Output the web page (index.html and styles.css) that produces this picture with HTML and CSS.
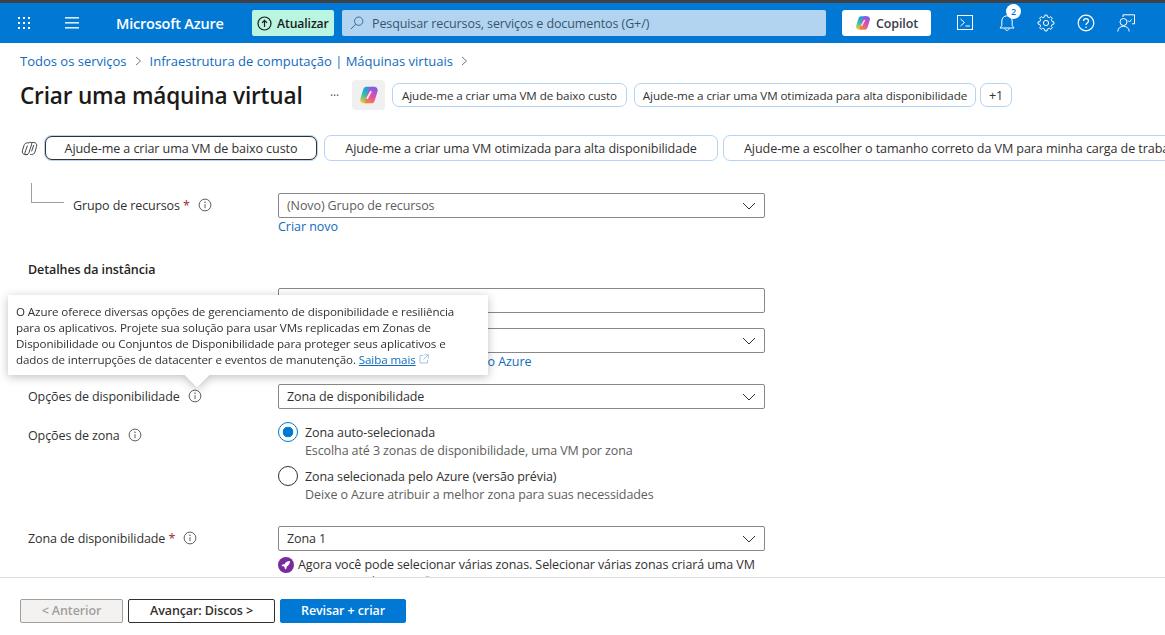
FILE: index.html
```html
<!DOCTYPE html>
<html lang="pt-BR">
<head>
    <meta charset="utf-8">
    <title>Criar uma máquina virtual - Microsoft Azure</title>
    <link rel="stylesheet" href="styles.css">
</head>
<body>
    <svg class="defs" width="0" height="0">
        <defs>
            <linearGradient id="cpA" x1="0.6" y1="0" x2="0.3" y2="1">
                <stop offset="0" stop-color="#2a8fe8"/>
                <stop offset="0.5" stop-color="#27c0a8"/>
                <stop offset="1" stop-color="#f2c93a"/>
            </linearGradient>
            <linearGradient id="cpB" x1="0.7" y1="0" x2="0.3" y2="1">
                <stop offset="0" stop-color="#7c5ce8"/>
                <stop offset="0.55" stop-color="#e04fa8"/>
                <stop offset="1" stop-color="#f6843c"/>
            </linearGradient>
            <symbol id="copilot" viewBox="0 0 24 24">
                <path fill="url(#cpA)" d="M9 2h6.500c1.300 0 1.900 1 1.500 2.200L12 19.500c-.5 1.500-1.600 2.500-3 2.500H6C2.800 22 .9 19.400 1.800 16.300L5.200 5.200C5.800 3.200 7 2 9 2z"/>
                <path fill="url(#cpB)" d="M15 22H8.500c-1.300 0-1.900-1-1.500-2.200L12 4.500C12.500 3 13.600 2 15 2h3c3.200 0 5.100 2.600 4.200 5.700l-3.400 11.100C18.200 20.800 17 22 15 22z"/>
                <path d="M14.500 7.500L9.500 16.500" stroke="#fff" stroke-width="2.200" fill="none" opacity=".85"/>
            </symbol>
            <symbol id="info" viewBox="0 0 14 14">
                <circle cx="7" cy="7" r="5.900" fill="none" stroke="currentColor"/>
                <path d="M7 6.200v4" stroke="currentColor" fill="none"/>
                <circle cx="7" cy="4.200" r=".8" fill="currentColor"/>
            </symbol>
            <symbol id="chevron" viewBox="0 0 14 8">
                <path d="M1 1l6 6 6-6" fill="none" stroke="currentColor" stroke-width="1"/>
            </symbol>
            <symbol id="external" viewBox="0 0 10 10">
                <path d="M4 1.500H1v7.500h7.500V6M5.500.7h3.800v3.800M9 1L4.500 5.500" fill="none" stroke="currentColor" stroke-width=".8"/>
            </symbol>
        </defs>
    </svg>

    <header class="topbar">
        <svg class="bar-icon waffle" width="14" height="14" viewBox="0 0 14 14" fill="#fff">
            <rect x="1" y="1" width="2" height="2"/><rect x="6" y="1" width="2" height="2"/><rect x="11" y="1" width="2" height="2"/>
            <rect x="1" y="6" width="2" height="2"/><rect x="6" y="6" width="2" height="2"/><rect x="11" y="6" width="2" height="2"/>
            <rect x="1" y="11" width="2" height="2"/><rect x="6" y="11" width="2" height="2"/><rect x="11" y="11" width="2" height="2"/>
        </svg>
        <svg class="bar-icon burger" width="14" height="12" viewBox="0 0 14 12" fill="#dcebf8">
            <rect y="0" width="14" height="1.600"/><rect y="5" width="14" height="1.600"/><rect y="10" width="14" height="1.600"/>
        </svg>
        <span class="brand">Microsoft Azure</span>
        <button class="update-btn">
            <svg width="15" height="15" viewBox="0 0 15 15" fill="none" stroke="#1b1b1b" stroke-width="1.200">
                <circle cx="7.500" cy="7.500" r="6.500"/>
                <path d="M7.500 11V4.500M5 6.800l2.500-2.500L10 6.800"/>
            </svg>
            Atualizar
        </button>
        <div class="search">
            <svg width="14" height="14" viewBox="0 0 14 14" fill="none" stroke="#3c6e9c" stroke-width="1">
                <circle cx="8.700" cy="5.200" r="4.200"/>
                <path d="M5.700 8.200L1 13"/>
            </svg>
            Pesquisar recursos, serviços e documentos (G+/)
        </div>
        <button class="copilot-btn">
            <svg width="16" height="16"><use href="#copilot"/></svg>
            Copilot
        </button>
        <div class="bar-tools">
            <svg width="18" height="16" viewBox="0 0 18 16" fill="none" stroke="#fff">
                <rect x=".5" y=".5" width="15" height="14"/>
                <path d="M3.500 4l4 3.500-4 3.500M8.500 11h4.500"/>
            </svg>
            <div class="bell">
                <svg width="16" height="18" viewBox="0 0 16 18" fill="none" stroke="#fff">
                    <path d="M1 14h14l-1.800-2.500V7A5.200 5.200 0 0 0 2.800 7v4.500zM6 14.500c0 2.500 4 2.500 4 0"/>
                </svg>
                <span class="badge">2</span>
            </div>
            <svg width="18" height="18" viewBox="0 0 18 18" fill="none" stroke="#fff" stroke-linejoin="round">
                <polygon points="7.58,2.86 7.89,1.08 10.11,1.08 10.42,2.86 12.34,3.66 13.81,2.61 15.39,4.19 14.34,5.66 15.14,7.58 16.92,7.89 16.92,10.11 15.14,10.42 14.34,12.34 15.39,13.81 13.81,15.39 12.34,14.34 10.42,15.14 10.11,16.92 7.89,16.92 7.58,15.14 5.66,14.34 4.19,15.39 2.61,13.81 3.66,12.34 2.86,10.42 1.08,10.11 1.08,7.89 2.86,7.58 3.66,5.66 2.61,4.19 4.19,2.61 5.66,3.66"/>
                <circle cx="9" cy="9" r="2.600"/>
            </svg>
            <svg width="18" height="18" viewBox="0 0 18 18" fill="none" stroke="#fff" stroke-width="1.200">
                <circle cx="9" cy="9" r="7.800"/>
                <path d="M6.500 7c0-3.200 5-3.200 5 0 0 2-2.500 2-2.500 4"/>
                <circle cx="9" cy="13.300" r=".8" fill="#fff" stroke="none"/>
            </svg>
            <svg width="18" height="18" viewBox="0 0 18 18" fill="none" stroke="#fff">
                <path d="M6 3V.8h11.500v9H15"/>
                <circle cx="6.500" cy="8" r="3.500"/>
                <path d="M.8 17.500c0-7 11.400-7 11.400 0M11 6.500l1.500 1.500 2-2.500"/>
            </svg>
        </div>
    </header>

    <nav class="breadcrumb">
        <a>Todos os serviços</a>
        <svg width="7" height="10" viewBox="0 0 7 10"><path d="M1 1l4.500 4L1 9" fill="none" stroke="#777"/></svg>
        <a>Infraestrutura de computação | Máquinas virtuais</a>
        <svg width="7" height="10" viewBox="0 0 7 10"><path d="M1 1l4.500 4L1 9" fill="none" stroke="#777"/></svg>
    </nav>

    <div class="title-row">
        <h1>Criar uma máquina virtual</h1>
        <span class="more">···</span>
        <span class="copilot-tile"><svg width="20" height="20"><use href="#copilot"/></svg></span>
        <button class="chip chip-a">Ajude-me a criar uma VM de baixo custo</button>
        <button class="chip chip-b">Ajude-me a criar uma VM otimizada para alta disponibilidade</button>
        <button class="chip chip-c">+1</button>
    </div>

    <div class="prompts">
        <svg class="prompt-icon" width="17" height="17" viewBox="0 0 24 24" fill="none" stroke="#444" stroke-width="1.400">
            <path d="M11 4H9C6.500 4 5 5.500 4.300 7.500L2 15c-1 3 1 5.500 4 5.500h3.500"/>
            <path d="M13 20.500h2c2.500 0 4-1.500 4.700-3.500L22 9c1-3-1-5.500-4-5.500h-3.500"/>
            <path d="M10.500 4c1.500-1 4-1 4.500.5.300.8.100 1.500-.2 2.500l-3.600 11c-.6 2-2 2.700-3.700 2.700-1.500 0-2.500-1.200-2-2.700L9 8"/>
            <path d="M15 16l3-9"/>
        </svg>
        <button class="prompt prompt-active">Ajude-me a criar uma VM de baixo custo</button>
        <button class="prompt prompt-b">Ajude-me a criar uma VM otimizada para alta disponibilidade</button>
        <button class="prompt prompt-c">Ajude-me a escolher o tamanho correto da VM para minha carga de trabalho</button>
    </div>

    <main class="form">
        <div class="row row-group">
            <span class="tree-line"></span>
            <label class="label label-group">Grupo de recursos <em>*</em><svg class="info" width="14" height="14"><use href="#info"/></svg></label>
            <div class="field">
                <div class="select placeholder">(Novo) Grupo de recursos<svg width="14" height="8"><use href="#chevron"/></svg></div>
                <a class="link">Criar novo</a>
            </div>
        </div>

        <h2>Detalhes da instância</h2>

        <div class="row row-name">
            <span class="label"></span>
            <div class="field"><div class="select"></div></div>
        </div>

        <div class="row row-region">
            <span class="label"></span>
            <div class="field">
                <div class="select"><svg width="14" height="8"><use href="#chevron"/></svg></div>
                <a class="link">Implantar em uma zona estendida do Azure</a>
            </div>
        </div>

        <div class="row row-avail">
            <label class="label">Opções de disponibilidade<svg class="info" width="14" height="14"><use href="#info"/></svg></label>
            <div class="field">
                <div class="select">Zona de disponibilidade<svg width="14" height="8"><use href="#chevron"/></svg></div>
            </div>
        </div>

        <div class="row row-zone-options">
            <label class="label label-zone">Opções de zona<svg class="info" width="14" height="14"><use href="#info"/></svg></label>
            <div class="field">
                <div class="radio-opt">
                    <span class="radio radio-on"></span>
                    <div class="radio-text">
                        <div class="radio-title">Zona auto-selecionada</div>
                        <div class="radio-desc">Escolha até 3 zonas de disponibilidade, uma VM por zona</div>
                    </div>
                </div>
                <div class="radio-opt">
                    <span class="radio"></span>
                    <div class="radio-text">
                        <div class="radio-title">Zona selecionada pelo Azure (versão prévia)</div>
                        <div class="radio-desc">Deixe o Azure atribuir a melhor zona para suas necessidades</div>
                    </div>
                </div>
            </div>
        </div>

        <div class="row row-zone">
            <label class="label">Zona de disponibilidade <em>*</em><svg class="info" width="14" height="14"><use href="#info"/></svg></label>
            <div class="field">
                <div class="select">Zona 1<svg width="14" height="8"><use href="#chevron"/></svg></div>
                <div class="notice">
                    <svg width="16" height="16" viewBox="0 0 16 16">
                        <circle cx="8" cy="8" r="8" fill="#7a2a9c"/>
                        <path d="M12 4c-2.500 0-4.500 1.200-5.500 3.200L4.500 7.500 3.500 9l2 .3 1.200 1.200.3 2 1.500-1 .3-2C10.800 8.500 12 6.500 12 4z" fill="#fff"/>
                    </svg>
                    <p>Agora você pode selecionar várias zonas. Selecionar várias zonas criará uma VM por zona. <a class="link-inline">Saiba mais</a> <svg class="ext" width="10" height="10"><use href="#external"/></svg></p>
                </div>
            </div>
        </div>

        <div class="tooltip">
            O Azure oferece diversas opções de gerenciamento de disponibilidade e resiliência para os aplicativos. Projete sua solução para usar VMs replicadas em Zonas de Disponibilidade ou Conjuntos de Disponibilidade para proteger seus aplicativos e dados de interrupções de datacenter e eventos de manutenção. <a class="link-inline">Saiba mais</a> <svg class="ext" width="10" height="10"><use href="#external"/></svg>
        </div>
    </main>

    <footer class="footer">
        <button class="btn btn-disabled">&lt; Anterior</button>
        <button class="btn btn-next">Avançar: Discos &gt;</button>
        <button class="btn btn-primary">Revisar + criar</button>
    </footer>
</body>
</html>
```

FILE: styles.css
```css
* {
    box-sizing: border-box;
}
html, body {
    height: 100%;
}
body {
    margin: 0;
    display: flex;
    flex-direction: column;
    overflow: hidden;
    font-family: "Open Sans", "Noto Sans", Arial, sans-serif;
    font-size: 12.5px;
    letter-spacing: -0.1px;
    color: #323130;
    background-color: #fff;
}
button {
    font-family: inherit;
    letter-spacing: inherit;
    cursor: pointer;
}
.defs {
    position: absolute;
}

/* barra superior */
.topbar {
    flex: none;
    height: 43px;
    display: flex;
    align-items: center;
    background-color: #0078d4;
    border-top: 3px solid #3f4144;
    color: #fff;
}
.waffle {
    margin-left: 17px;
}
.burger {
    margin-left: 34px;
}
.brand {
    margin-left: 37px;
    width: 136px;
    font-size: 14.5px;
    font-weight: 600;
    letter-spacing: -0.2px;
}
.update-btn {
    width: 82px;
    height: 26px;
    display: flex;
    align-items: center;
    gap: 5px;
    padding: 0 0 0 5px;
    border: none;
    border-radius: 2px;
    background-color: #b9f5e1;
    color: #1b1b1b;
    font-size: 12.2px;
    font-weight: 600;
}
.search {
    margin-left: 8px;
    width: 484px;
    height: 26px;
    display: flex;
    align-items: center;
    gap: 8px;
    padding-left: 8px;
    border-radius: 2px;
    background-color: #b3d4f0;
    color: #37556e;
    font-size: 12.5px;
}
.copilot-btn {
    margin-left: 16px;
    width: 89px;
    height: 26px;
    display: flex;
    align-items: center;
    justify-content: center;
    gap: 5px;
    padding: 0;
    border: none;
    border-radius: 3px;
    background-color: #fff;
    color: #3a3a4a;
    font-size: 12.5px;
    font-weight: 600;
}
.bar-tools {
    margin-left: 26px;
    display: flex;
    align-items: center;
    gap: 22px;
}
.bell {
    position: relative;
    width: 16px;
    height: 18px;
    margin-left: 2px;
}
.badge {
    position: absolute;
    top: -10px;
    left: 7px;
    width: 15px;
    height: 15px;
    border-radius: 50%;
    background-color: #fff;
    color: #0078d4;
    font-size: 9px;
    font-weight: 600;
    line-height: 15px;
    text-align: center;
}

/* migalhas e titulo */
.breadcrumb {
    flex: none;
    height: 18px;
    margin-top: 9px;
    padding-left: 20px;
    display: flex;
    align-items: center;
    gap: 8px;
    color: #0f6cbd;
    font-size: 13px;
    letter-spacing: 0;
}
.title-row {
    flex: none;
    height: 30px;
    margin-top: 10px;
    padding-left: 20px;
    display: flex;
    align-items: center;
}
h1 {
    margin: 0;
    width: 310px;
    font-size: 22.6px;
    font-weight: 600;
    letter-spacing: -0.2px;
    color: #1b1a19;
}
.more {
    width: 22px;
    color: #555;
    font-size: 12px;
}
.copilot-tile {
    width: 33px;
    height: 30px;
    display: flex;
    align-items: center;
    justify-content: center;
    border-radius: 4px;
    background-color: #f0f0f0;
}
.chip {
    height: 24px;
    padding: 0;
    border: 1px solid #b5d3f2;
    border-radius: 7px;
    background-color: #fff;
    color: #323130;
    font-size: 11.65px;
}
.chip-a {
    margin-left: 7px;
    width: 235px;
}
.chip-b {
    margin-left: 7px;
    width: 342px;
}
.chip-c {
    margin-left: 4px;
    width: 32px;
    font-size: 12.5px;
}

/* prompts */
.prompts {
    flex: none;
    height: 26px;
    margin-top: 25px;
    padding-left: 21px;
    display: flex;
    align-items: center;
    white-space: nowrap;
    overflow: hidden;
}
.prompt-icon {
    flex: none;
}
.prompt {
    flex: none;
    height: 26px;
    padding: 1px 0 0;
    border: 1px solid #b5d3f2;
    border-radius: 7px;
    background-color: #fff;
    color: #323130;
    font-size: 12.6px;
}
.prompt-active {
    margin-left: 7px;
    width: 272px;
    height: 24px;
    border-color: #323130;
    box-shadow: 0 0 0 1px #b5d3f2;
}
.prompt-b {
    margin-left: 7px;
    width: 394px;
}
.prompt-c {
    margin-left: 5px;
    width: 500px;
    padding-left: 20px;
    text-align: left;
}

/* formulario */
.form {
    position: relative;
    flex: 1;
    min-height: 0;
    overflow: hidden;
    padding-top: 32px;
}
.row {
    display: flex;
    align-items: flex-start;
}
.label {
    flex: none;
    width: 278px;
    height: 24px;
    padding-left: 28px;
    display: flex;
    align-items: center;
    white-space: pre;
}
.label em {
    color: #a4262c;
    font-style: normal;
}
.label-zone {
    padding-top: 2px;
}
.info {
    margin-left: 8px;
    color: #605e5c;
}
.row-group {
    padding-left: 31px;
}
.tree-line {
    flex: none;
    width: 33px;
    height: 20px;
    margin-top: -10px;
    border-left: 1px solid #a19f9d;
    border-bottom: 1px solid #a19f9d;
}
.label-group {
    width: 214px;
    padding-left: 9px;
}
.field {
    flex: none;
    width: 487px;
}
.select {
    height: 25px;
    display: flex;
    align-items: center;
    justify-content: space-between;
    padding: 0 8px;
    border: 1px solid #8a8886;
    border-radius: 2px;
    background-color: #fff;
    color: #323130;
}
.select svg {
    margin-left: auto;
    color: #323130;
}
.placeholder {
    color: #605e5c;
}
.link {
    display: block;
    height: 18px;
    line-height: 18px;
    color: #0f6cbd;
    letter-spacing: -0.05px;
}
h2 {
    margin: 25px 0 0;
    padding-left: 28px;
    height: 18px;
    line-height: 18px;
    font-size: 12.5px;
    font-weight: 600;
    color: #252423;
}
.row-name {
    margin-top: 9px;
}
.row-region {
    margin-top: 15px;
}
.row-avail {
    margin-top: 13px;
}
.row-zone-options {
    margin-top: 13px;
}
.radio-opt {
    display: flex;
    gap: 7px;
    height: 44px;
}
.radio {
    flex: none;
    width: 20px;
    height: 20px;
    border: 1px solid #323130;
    border-radius: 50%;
    background-color: #fff;
}
.radio-on {
    border-color: #0078d4;
    background: radial-gradient(circle, #0078d4 0, #0078d4 5px, #fff 5.6px);
}
.radio-text {
    padding-top: 2px;
}
.radio-title {
    height: 18px;
    line-height: 18px;
}
.radio-desc {
    height: 18px;
    line-height: 18px;
    color: #605e5c;
}
.row-zone {
    margin-top: 16px;
}
.notice {
    margin-top: 5px;
    display: flex;
    gap: 4px;
}
.notice svg {
    flex: none;
    margin-top: 1px;
}
.notice p {
    margin: 0;
    line-height: 17px;
}
.notice .ext {
    margin-top: 0;
}
.link-inline {
    color: #0f6cbd;
    text-decoration: underline;
}
.ext {
    color: #8ab4dc;
}

/* tooltip */
.tooltip {
    position: absolute;
    left: 8px;
    top: 134px;
    width: 480px;
    height: 80px;
    padding: 9px 18px 9px 8px;
    background-color: #fff;
    filter: drop-shadow(0 2px 5px rgba(0, 0, 0, 0.25));
    font-size: 11.6px;
    line-height: 16px;
    color: #323130;
}
.tooltip::after {
    content: "";
    position: absolute;
    left: 180px;
    bottom: -9px;
    width: 18px;
    height: 18px;
    background-color: #fff;
    transform: rotate(45deg);
    clip-path: polygon(100% 0, 100% 100%, 0 100%);
}

/* rodape */
.footer {
    flex: none;
    height: 58px;
    padding: 21px 0 0 20px;
    display: flex;
    gap: 5px;
    align-items: flex-start;
    border-top: 1px solid #e1dfdd;
    background-color: #fff;
}
.btn {
    height: 24px;
    padding: 0 0 2px;
    border: 1px solid #323130;
    border-radius: 2px;
    background-color: #fff;
    color: #323130;
    font-size: 12.5px;
    font-weight: 600;
}
.btn-disabled {
    width: 103px;
    border-color: #a19f9d;
    background-color: #f3f2f1;
    color: #a19f9d;
}
.btn-next {
    width: 147px;
}
.btn-primary {
    width: 126px;
    border-color: #0078d4;
    background-color: #0078d4;
    color: #fff;
}
```
